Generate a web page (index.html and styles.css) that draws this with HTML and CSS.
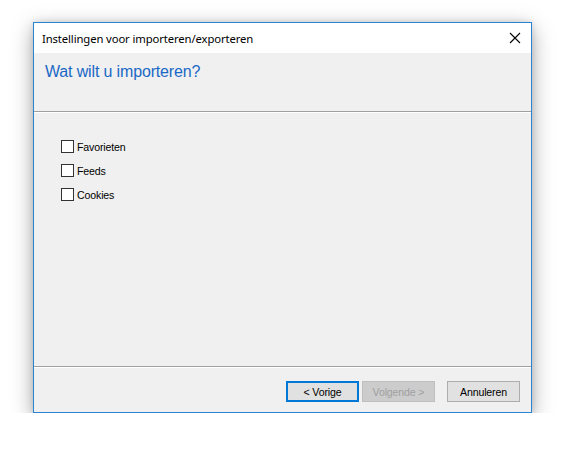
FILE: index.html
```html
<!DOCTYPE html>
<html>
<head>
<meta charset="utf-8">
<link rel="stylesheet" href="styles.css">
</head>
<body>
<div class="window">
  <div class="titlebar">
    <span class="title">Instellingen voor importeren/exporteren</span>
    <svg class="close" width="12" height="12" viewBox="0 0 12 12"><path d="M1 1 L11 11 M11 1 L1 11" stroke="#000" stroke-width="1.1" fill="none"/></svg>
  </div>
  <div class="header">
    <div class="heading">Wat wilt u importeren?</div>
  </div>
  <div class="content">
    <label class="check"><span class="box"></span><span>Favorieten</span></label>
    <label class="check"><span class="box"></span><span>Feeds</span></label>
    <label class="check"><span class="box"></span><span>Cookies</span></label>
  </div>
  <div class="footer">
    <button class="btn default">&lt; Vorige</button>
    <button class="btn disabled">Volgende &gt;</button>
    <button class="btn cancel">Annuleren</button>
  </div>
</div>
</body>
</html>
```
FILE: styles.css
```css
html, body {
  margin: 0;
  padding: 0;
  background: #ffffff;
}
body {
  padding: 22px 0 0 33px;
  font-family: "Liberation Sans", Arial, sans-serif;
}
.window {
  width: 497px;
  height: 389px;
  border: 1px solid #2b84d0;
  background: #f0f0f0;
  box-shadow: 0 6px 20px rgba(0, 0, 0, 0.35), 0 0 6px rgba(0, 0, 0, 0.12);
  display: flex;
  flex-direction: column;
}
.titlebar {
  height: 30px;
  background: #ffffff;
  display: flex;
  align-items: center;
  justify-content: space-between;
  padding: 0 10px 0 8px;
}
.title {
  font-family: "Noto Sans", "Open Sans", sans-serif;
  font-size: 11.3px;
  color: #000;
  letter-spacing: -0.12px;
}
.header {
  border-bottom: 1px solid #a0a0a0;
  box-shadow: 0 1px 0 #ffffff;
  padding: 0 0 0 11px;
  box-sizing: border-box;
  height: 59px;
}
.heading {
  margin-top: 10px;
  font-size: 16px;
  letter-spacing: -0.15px;
  color: #1a68c6;
}
.content {
  flex: 1;
  padding: 28px 0 0 27px;
  display: flex;
  flex-direction: column;
  gap: 11px;
  border-bottom: 1px solid #a0a0a0;
}
.check {
  display: flex;
  align-items: center;
  gap: 3px;
  font-size: 10.6px;
  letter-spacing: -0.15px;
  color: #000;
  height: 13px;
}
.box {
  width: 11px;
  height: 11px;
  border: 1px solid #333;
  background: #fff;
}
.footer {
  height: 45px;
  box-sizing: border-box;
  border-top: 1px solid #ffffff;
  display: flex;
  justify-content: flex-end;
  align-items: flex-start;
  padding: 13px 11px 0 0;
}
.btn {
  width: 73px;
  height: 21px;
  box-sizing: border-box;
  margin: 0;
  font-family: "Liberation Sans", Arial, sans-serif;
  font-size: 10.6px;
  letter-spacing: -0.15px;
  background: #e1e1e1;
  border: 1px solid #adadad;
  color: #000;
  padding: 0;
}
.default {
  border: 2px solid #0078d7;
}
.disabled {
  background: #cccccc;
  border-color: #bfbfbf;
  color: #a0a0a0;
  margin-left: 3px;
}
.cancel {
  margin-left: 12px;
}
```
